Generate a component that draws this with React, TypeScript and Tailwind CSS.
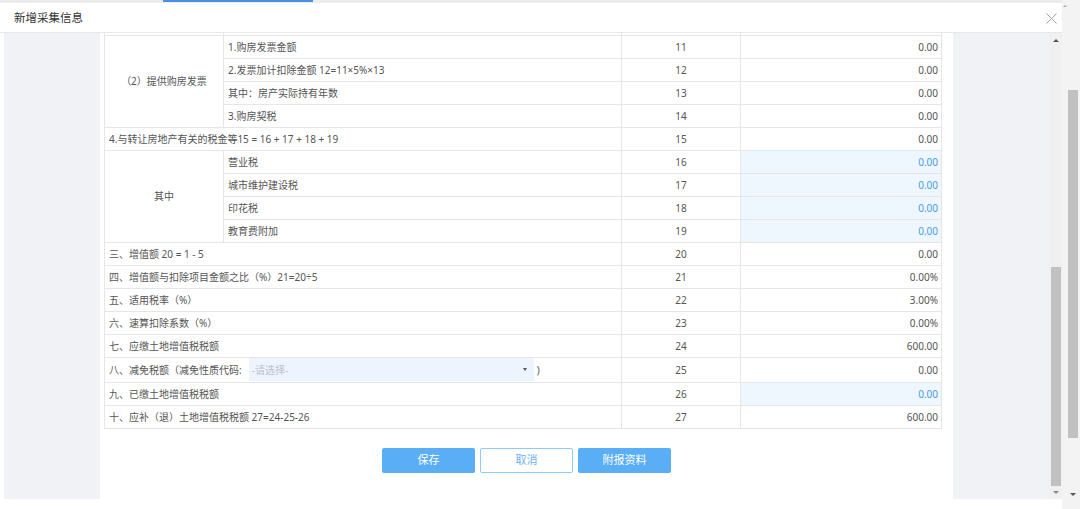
import React from 'react'

type Item = { label: string; no: string; value: string; edit?: boolean }

const group1: Item[] = [
  { label: '1.购房发票金额', no: '11', value: '0.00' },
  { label: '2.发票加计扣除金额 12=11×5%×13', no: '12', value: '0.00' },
  { label: '其中：房产实际持有年数', no: '13', value: '0.00' },
  { label: '3.购房契税', no: '14', value: '0.00' },
]

const group2: Item[] = [
  { label: '营业税', no: '16', value: '0.00', edit: true },
  { label: '城市维护建设税', no: '17', value: '0.00', edit: true },
  { label: '印花税', no: '18', value: '0.00', edit: true },
  { label: '教育费附加', no: '19', value: '0.00', edit: true },
]

const tail: Item[] = [
  { label: '三、增值额 20 = 1 - 5', no: '20', value: '0.00' },
  { label: '四、增值额与扣除项目金额之比（%）21=20÷5', no: '21', value: '0.00%' },
  { label: '五、适用税率（%）', no: '22', value: '3.00%' },
  { label: '六、速算扣除系数（%）', no: '23', value: '0.00%' },
  { label: '七、应缴土地增值税税额', no: '24', value: '600.00' },
]

const cell = 'border border-[#e6e6e6] p-0 h-[23px]'

function NoCell({ no }: { no: string }) {
  return <td className={`${cell} text-center`}>{no}</td>
}

function ValueCell({ value, edit }: { value: string; edit?: boolean }) {
  return (
    <td className={`${cell} text-right pr-[3px] ${edit ? 'bg-[#eef6fe] text-[#4a9de6]' : ''}`}>
      {value}
    </td>
  )
}

function Group({ title, items }: { title: string; items: Item[] }) {
  return (
    <>
      {items.map((it, i) => (
        <tr key={it.no}>
          {i === 0 && (
            <td rowSpan={items.length} className={`${cell} text-center`}>
              {title}
            </td>
          )}
          <td className={`${cell} pl-[4px]`}>{it.label}</td>
          <NoCell no={it.no} />
          <ValueCell value={it.value} edit={it.edit} />
        </tr>
      ))}
    </>
  )
}

function FullRow({ item }: { item: Item }) {
  return (
    <tr>
      <td colSpan={2} className={`${cell} pl-[4px]`}>{item.label}</td>
      <NoCell no={item.no} />
      <ValueCell value={item.value} edit={item.edit} />
    </tr>
  )
}

export default function App() {
  return (
    <div className="w-[1080px] h-[509px] flex bg-white overflow-hidden font-['Noto_Sans','Noto_Sans_CJK_SC',sans-serif] text-[#555]">
      <div className="w-[1062px] flex flex-col">
        {/* 上方标签条 */}
        <div className="h-[3px] bg-[#ececec] flex">
          <div className="ml-[163px] w-[150px] h-[2px] bg-[#4a90e2]" />
        </div>

        {/* 弹窗标题 */}
        <div className="h-[30px] flex items-center justify-between pl-[14px] pr-[5px] border-b border-[#e8e8e8]">
          <span className="text-[11.5px] text-[#333]">新增采集信息</span>
          <svg width="11" height="11" viewBox="0 0 11 11" className="mt-[2px]">
            <path d="M0.5 0.5L10.5 10.5M10.5 0.5L0.5 10.5" stroke="#a0a0a0" strokeWidth="1" />
          </svg>
        </div>

        <div className="flex h-[466px]">
          <div className="ml-[4px] w-[96px] bg-[#f1f2f6]" />

          <div className="w-[853px] bg-white flex flex-col overflow-hidden">
            <table className="ml-[4px] w-[837px] table-fixed border-collapse text-[10px] leading-none">
              <colgroup>
                <col className="w-[119px]" />
                <col className="w-[398px]" />
                <col className="w-[119px]" />
                <col className="w-[201px]" />
              </colgroup>
              <tbody>
                <tr>
                  <td className="border-x border-b border-[#e6e6e6] p-0 h-[2px]" />
                  <td className="border-x border-b border-[#e6e6e6] p-0 h-[2px]" />
                  <td className="border-x border-b border-[#e6e6e6] p-0 h-[2px]" />
                  <td className="border-x border-b border-[#e6e6e6] p-0 h-[2px]" />
                </tr>
                <Group title="（2）提供购房发票" items={group1} />
                <FullRow item={{ label: '4.与转让房地产有关的税金等15 = 16 + 17 + 18 + 19', no: '15', value: '0.00' }} />
                <Group title="其中" items={group2} />
                {tail.map((it) => (
                  <FullRow key={it.no} item={it} />
                ))}
                <tr>
                  <td colSpan={2} className="border border-[#e6e6e6] p-0 h-[25px]">
                    <div className="flex items-center h-full pl-[4px]">
                      <span>八、减免税额（减免性质代码:</span>
                      <div className="ml-[7px] w-[285px] h-[23px] bg-[#eef4fd] flex items-center justify-between pl-[3px] pr-[7px]">
                        <span className="text-[#b8c2cf]">-请选择-</span>
                        <span className="w-0 h-0 border-x-[2.5px] border-x-transparent border-t-[3px] border-t-[#555]" />
                      </div>
                      <span className="ml-[3px]">)</span>
                    </div>
                  </td>
                  <td className="border border-[#e6e6e6] p-0 text-center">25</td>
                  <td className="border border-[#e6e6e6] p-0 text-right pr-[3px]">0.00</td>
                </tr>
                <FullRow item={{ label: '九、已缴土地增值税税额', no: '26', value: '0.00', edit: true }} />
                <FullRow item={{ label: '十、应补（退）土地增值税税额 27=24-25-26', no: '27', value: '600.00' }} />
              </tbody>
            </table>

            <div className="flex justify-center gap-[5px] mt-[19px] text-[11px]">
              <button className="w-[93px] h-[25px] rounded-[2px] bg-[#5aaef5] text-white">保存</button>
              <button className="w-[93px] h-[25px] rounded-[2px] bg-white border border-[#8fcbfa] text-[#6bb3f2]">取消</button>
              <button className="w-[93px] h-[25px] rounded-[2px] bg-[#5aaef5] text-white">附报资料</button>
            </div>
          </div>

          <div className="w-[96px] bg-[#f1f2f6]" />

          {/* 内层滚动条 */}
          <div className="w-[13px] bg-[#f0f0f0] flex flex-col items-center">
            <div className="mt-[6px] w-0 h-0 border-x-[3px] border-x-transparent border-b-[3px] border-b-[#555]" />
            <div className="mt-[225px] w-[10px] h-[219px] bg-[#c1c1c1]" />
            <div className="mt-[5px] w-0 h-0 border-x-[3px] border-x-transparent border-t-[3px] border-t-[#888]" />
          </div>
        </div>
      </div>

      {/* 外层滚动条 */}
      <div className="w-[18px] bg-[#f3f3f3] flex flex-col">
        <div className="ml-[1px] mt-[5px] w-0 h-0 border-x-[2px] border-x-transparent border-b-[2px] border-b-[#aaa]" />
        <div className="ml-[6px] mt-[83px] w-[10px] h-[348px] bg-[#c1c1c1]" />
        <div className="ml-[8px] mt-[55px] w-0 h-0 border-x-[3px] border-x-transparent border-t-[3px] border-t-[#555]" />
      </div>
    </div>
  )
}
